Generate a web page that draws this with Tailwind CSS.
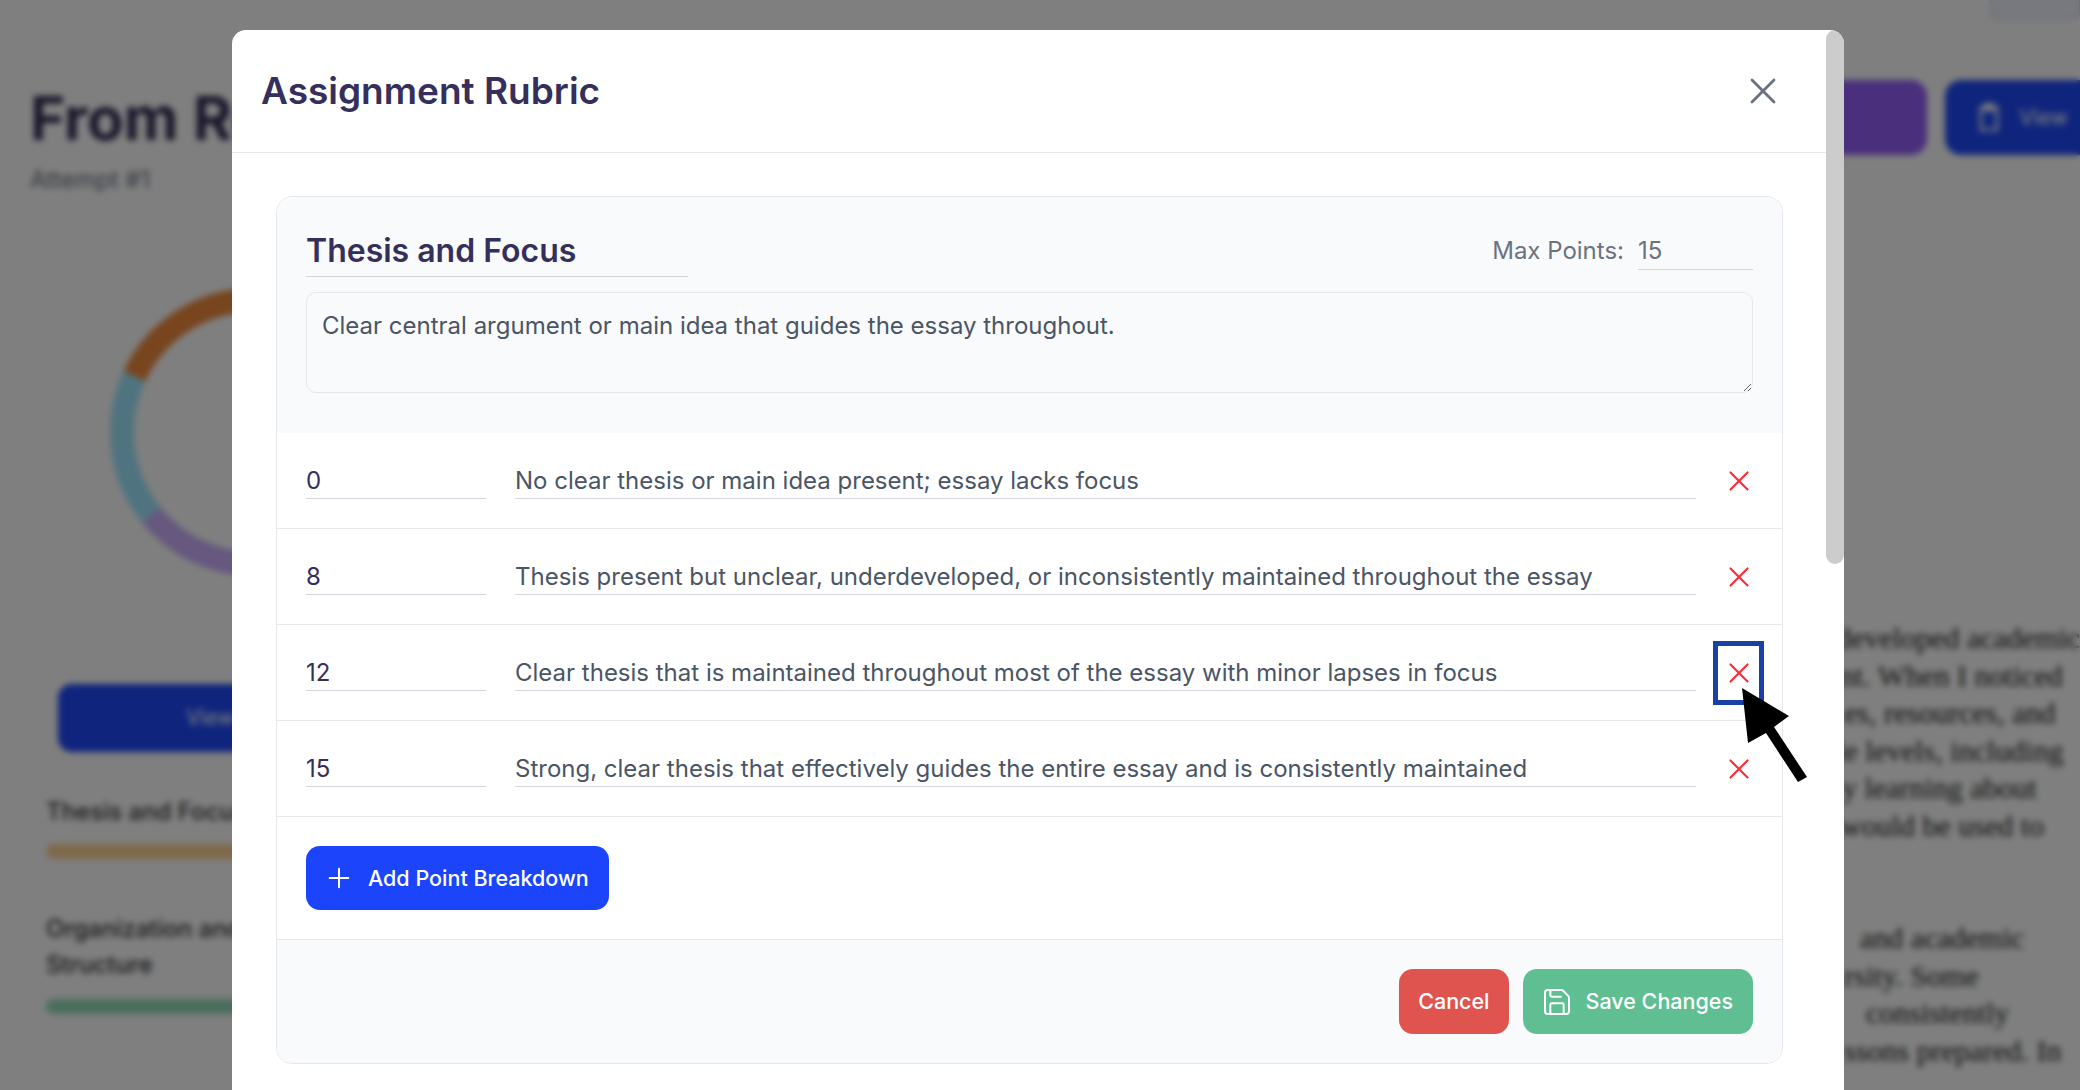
<!DOCTYPE html>
<html lang="en">

<head>
  <meta charset="UTF-8" />
  <meta name="viewport" content="width=device-width, initial-scale=1.0" />
  <title>Assignment Rubric</title>
  <script src="https://cdn.jsdelivr.net/npm/@tailwindcss/browser@4"></script>
</head>

<body class="relative h-[1090px] overflow-hidden bg-white font-['Inter',sans-serif]">
  <!-- page behind the dialog -->
  <div class="h-[1090px] overflow-hidden">
    <div class="flex justify-end h-[20px]">
      <div class="w-[90px] h-[20px] rounded-b-lg border border-t-0 border-gray-300 bg-indigo-50"></div>
    </div>

    <div class="flex justify-between pl-[30px] mt-[60px]">
      <div>
        <div class="text-[60px] leading-[76px] font-bold text-[#332f55] whitespace-nowrap">From Research</div>
        <div class="text-[24px] leading-[32px] mt-[8px] text-gray-500">Attempt #1</div>
      </div>
      <div class="flex gap-[18px] mr-[-70px]">
        <div class="w-[220px] h-[75px] rounded-[16px] bg-[#945ffa]"></div>
        <div class="w-[205px] h-[75px] rounded-[16px] bg-[#1e4afa] flex items-center gap-[14px] pl-[28px] text-white text-[21px]">
          <svg class="w-[32px] h-[40px]" viewBox="0 0 24 24" fill="none" stroke="currentColor" stroke-width="2"><path d="M6 4h12v17H6z" /><path d="M9 2h6v4H9z" /></svg>
          <span>View</span>
        </div>
      </div>
    </div>

    <div class="flex">
      <div class="w-[520px] pl-[46px] shrink-0">
        <svg class="ml-[58px] mt-[86px] w-[300px] h-[300px]" viewBox="0 0 300 300" fill="none" stroke-width="24">
          <path d="M150 18A132 132 0 0 0 30.4 94.2" stroke="#f08a3c" />
          <path d="M30.4 94.2A132 132 0 0 0 47.4 233" stroke="#9ee8ff" />
          <path d="M47.4 233A132 132 0 0 0 150 282" stroke="#ccb0ff" />
        </svg>
        <div class="ml-[12px] mt-[102px] w-[400px] h-[68px] rounded-[14px] bg-[#1e4afa] text-white text-[21px] flex items-center pl-[128px]">View Full</div>
        <div class="mt-[42px] text-[24px] leading-[36px] font-medium text-[#333]">Thesis and Focus</div>
        <div class="mt-[14px] w-[420px] h-[15px] rounded-full bg-[#ffd294]"></div>
        <div class="mt-[52px] text-[24px] leading-[36px] font-medium text-[#333]">Organization and<br />Structure</div>
        <div class="mt-[16px] w-[420px] h-[15px] rounded-full bg-[#94dcb8]"></div>
      </div>

      <div class="flex-1 min-w-0 pt-[423px] pl-[1324px] font-['Liberation_Serif',serif] text-[30px] leading-[37.5px] text-[#222] whitespace-nowrap">
        <div class="ml-[-72px]">have developed academically hav</div>
        <div class="ml-[-4px]">nt. When I noticed</div>
        <div>es, resources, and</div>
        <div class="ml-[-8px]">le levels, including</div>
        <div class="ml-[-2px]">y learning about</div>
        <div class="ml-[-4px]">would be used to</div>
        <div class="mt-[75px] ml-[16px]">and academic</div>
        <div>rsity. Some</div>
        <div class="ml-[22px]">consistently</div>
        <div>ssons prepared. In</div>
      </div>
    </div>
  </div>

  <!-- dialog -->
  <div class="absolute inset-0 bg-black/50 backdrop-blur-[3px]">
    <div class="relative ml-[232px] mt-[30px] w-[1612px] h-[1060px] bg-white rounded-t-[14px] overflow-hidden">
      <header class="flex items-center justify-between h-[123px] w-[1594px] pl-[29px] pr-[41px] border-b border-gray-200">
        <h2 class="text-[37px] font-semibold text-[#352f5b]">Assignment Rubric</h2>
        <svg class="w-[44px] h-[44px] text-gray-500" viewBox="0 0 24 24" fill="none" stroke="currentColor" stroke-width="1.5" stroke-linecap="round"><path d="M18 6 6 18" /><path d="m6 6 12 12" /></svg>
      </header>

      <div class="w-[1594px] pl-[44px] pr-[43px] pt-[43px]">
        <div class="border border-gray-200 rounded-[16px] overflow-hidden">
          <div class="bg-gray-50 h-[236px] px-[29px] pt-[29px]">
            <div class="flex items-start justify-between">
              <div class="w-[382px] h-[51px] border-b border-gray-300 text-[32px] leading-[50px] font-semibold text-[#352f5b]">Thesis and Focus</div>
              <div class="flex items-start text-[24px] text-gray-500">
                <span class="leading-[50px] mr-[14px]">Max Points:</span>
                <div class="w-[115px] h-[44px] leading-[50px] border-b border-gray-300">15</div>
              </div>
            </div>
            <textarea class="block w-full h-[101px] mt-[15px] px-[15px] py-[15px] border border-gray-200 rounded-[10px] bg-gray-50 text-[24px] leading-[36px] text-gray-600">Clear central argument or main idea that guides the essay throughout.</textarea>
          </div>

          <div class="h-[96px] flex items-center gap-[29px] pl-[29px] pr-[18px] border-b border-gray-200">
            <div class="w-[180px] h-[36px] leading-[36px] border-b border-gray-300 text-[24px] text-[#352f5b]">0</div>
            <div class="flex-1 h-[36px] leading-[36px] border-b border-gray-300 text-[24px] text-gray-600">No clear thesis or main idea present; essay lacks focus</div>
            <button class="ml-[-12px] w-[51px] h-[64px] flex items-center justify-center text-red-500">
              <svg class="w-[34px] h-[34px]" viewBox="0 0 24 24" fill="none" stroke="currentColor" stroke-width="1.5" stroke-linecap="round"><path d="M18 6 6 18" /><path d="m6 6 12 12" /></svg>
            </button>
          </div>
          <div class="h-[96px] flex items-center gap-[29px] pl-[29px] pr-[18px] border-b border-gray-200">
            <div class="w-[180px] h-[36px] leading-[36px] border-b border-gray-300 text-[24px] text-[#352f5b]">8</div>
            <div class="flex-1 h-[36px] leading-[36px] border-b border-gray-300 text-[24px] text-gray-600">Thesis present but unclear, underdeveloped, or inconsistently maintained throughout the essay</div>
            <button class="ml-[-12px] w-[51px] h-[64px] flex items-center justify-center text-red-500">
              <svg class="w-[34px] h-[34px]" viewBox="0 0 24 24" fill="none" stroke="currentColor" stroke-width="1.5" stroke-linecap="round"><path d="M18 6 6 18" /><path d="m6 6 12 12" /></svg>
            </button>
          </div>
          <div class="h-[96px] flex items-center gap-[29px] pl-[29px] pr-[18px] border-b border-gray-200">
            <div class="w-[180px] h-[36px] leading-[36px] border-b border-gray-300 text-[24px] text-[#352f5b]">12</div>
            <div class="flex-1 h-[36px] leading-[36px] border-b border-gray-300 text-[24px] text-gray-600">Clear thesis that is maintained throughout most of the essay with minor lapses in focus</div>
            <button class="ml-[-12px] w-[51px] h-[64px] flex items-center justify-center text-red-500 border-[5px] border-[#1a3fa5]">
              <svg class="w-[34px] h-[34px] shrink-0" viewBox="0 0 24 24" fill="none" stroke="currentColor" stroke-width="1.5" stroke-linecap="round"><path d="M18 6 6 18" /><path d="m6 6 12 12" /></svg>
            </button>
          </div>
          <div class="h-[96px] flex items-center gap-[29px] pl-[29px] pr-[18px] border-b border-gray-200">
            <div class="w-[180px] h-[36px] leading-[36px] border-b border-gray-300 text-[24px] text-[#352f5b]">15</div>
            <div class="flex-1 h-[36px] leading-[36px] border-b border-gray-300 text-[24px] text-gray-600">Strong, clear thesis that effectively guides the entire essay and is consistently maintained</div>
            <button class="ml-[-12px] w-[51px] h-[64px] flex items-center justify-center text-red-500">
              <svg class="w-[34px] h-[34px]" viewBox="0 0 24 24" fill="none" stroke="currentColor" stroke-width="1.5" stroke-linecap="round"><path d="M18 6 6 18" /><path d="m6 6 12 12" /></svg>
            </button>
          </div>

          <div class="h-[123px] pl-[29px] pt-[29px] border-b border-gray-200">
            <button class="flex items-center gap-[13px] h-[64px] pl-[17px] pr-[20px] rounded-[14px] bg-[#1b44fb] text-white text-[21.5px] font-medium">
              <svg class="w-[32px] h-[32px]" viewBox="0 0 24 24" fill="none" stroke="currentColor" stroke-width="1.5" stroke-linecap="round"><path d="M5 12h14" /><path d="M12 5v14" /></svg>
              Add Point Breakdown
            </button>
          </div>

          <div class="h-[123px] bg-gray-50 flex justify-end gap-[14px] pr-[29px] pt-[29px]">
            <button class="h-[65px] px-[19px] rounded-[14px] bg-[#e05450] text-white text-[21.5px] font-medium">Cancel</button>
            <button class="flex items-center gap-[13px] h-[65px] pl-[18px] pr-[20px] rounded-[14px] bg-[#5fbf92] text-white text-[21.5px] font-medium">
              <svg class="w-[32px] h-[32px]" viewBox="0 0 24 24" fill="none" stroke="currentColor" stroke-width="1.5" stroke-linecap="round" stroke-linejoin="round"><path d="M15.2 3a2 2 0 0 1 1.4.6l3.8 3.8a2 2 0 0 1 .6 1.4V19a2 2 0 0 1-2 2H5a2 2 0 0 1-2-2V5a2 2 0 0 1 2-2z" /><path d="M17 21v-7a1 1 0 0 0-1-1H8a1 1 0 0 0-1 1v7" /><path d="M7 3v4a1 1 0 0 0 1 1h7" /></svg>
              Save Changes
            </button>
          </div>
        </div>
      </div>

      <!-- scrollbar thumb -->
      <div class="absolute top-0 right-0 w-[18px] h-[534px] rounded-[9px] bg-[#cccccc]"></div>

      <!-- pointer arrow over the delete button -->
      <svg class="absolute left-[1500px] top-[650px] w-[90px] h-[110px]" viewBox="0 0 90 110">
        <path d="M10 8 57 36 42 47 75 97 66 102 34 53 16 63z" fill="#000" />
      </svg>
    </div>
  </div>
</body>

</html>
